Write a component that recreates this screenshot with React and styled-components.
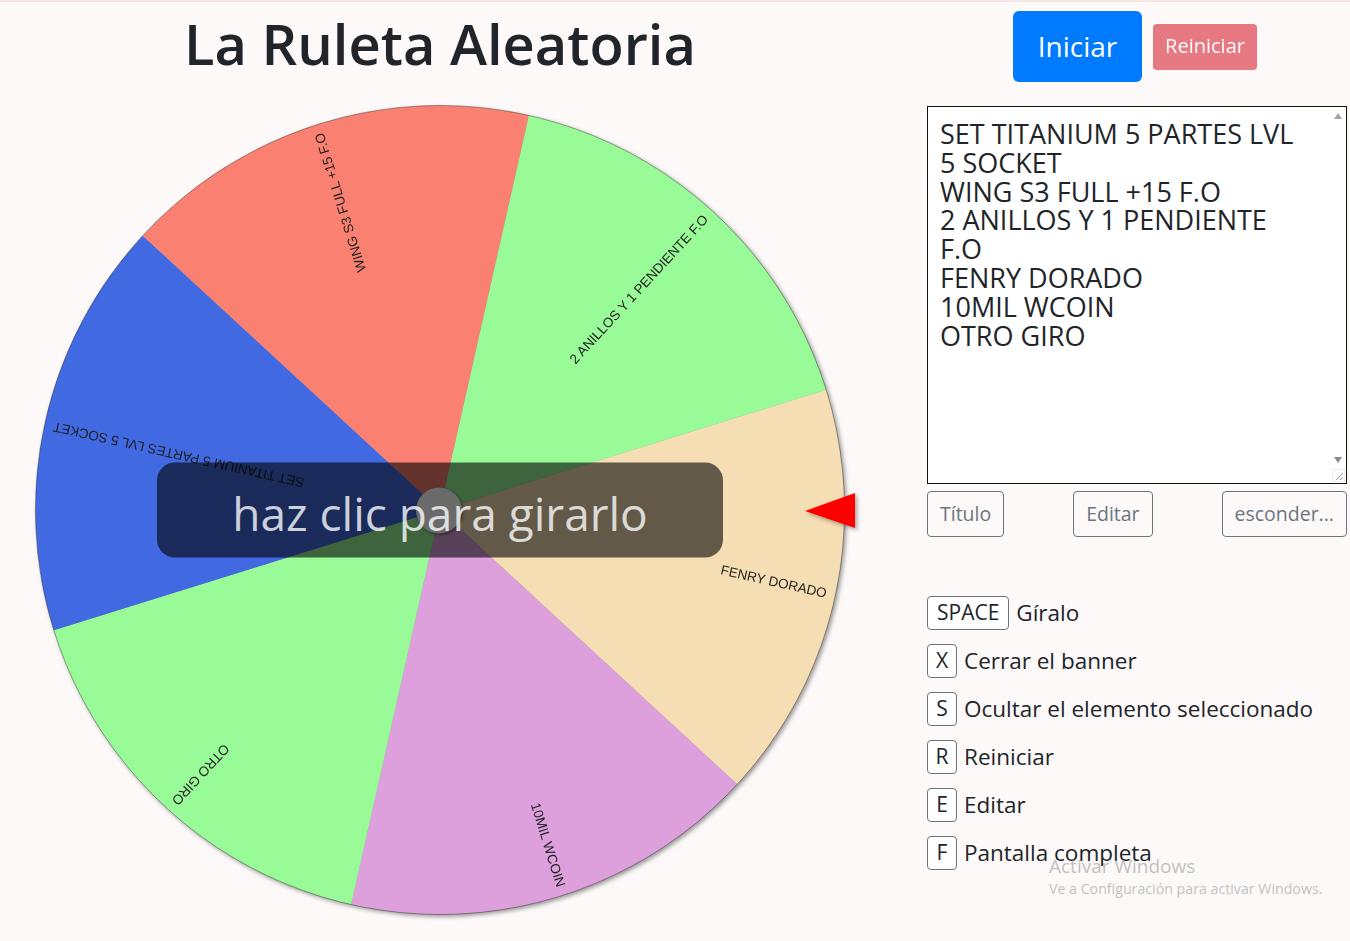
import React from 'react';
import styled, { createGlobalStyle } from 'styled-components';

const Global = createGlobalStyle`
  html, body { margin: 0; padding: 0; background: #fdf9f9; }
  body { font-family: "Open Sans", "Noto Sans", sans-serif; color: #212529; }
  * { box-sizing: border-box; }
`;

const Page = styled.div`
  position: relative;
  width: 1350px;
  height: 941px;
  border-top: 2px solid #f4e4e4;
  display: flex;
  overflow: hidden;
`;

const LeftCol = styled.div`
  width: 880px;
  display: flex;
  flex-direction: column;
  align-items: center;
`;

const TitleBar = styled.div`
  height: 103px;
  display: flex;
  justify-content: center;
  align-items: flex-start;
  padding-top: 3px;
`;

const Title = styled.h1`
  margin: 0;
  font-size: 56px;
  line-height: 76px;
  font-weight: 600;
  color: #212529;
`;

const WheelArea = styled.div`
  position: relative;
  width: 880px;
  height: 810px;
  display: flex;
  justify-content: center;
`;

const WheelSvg = styled.svg`
  width: 810px;
  height: 810px;
  overflow: visible;
  filter: drop-shadow(2px 2px 2px rgba(0, 0, 0, 0.4));
`;

const SegLabel = styled.text`
  font-family: "Liberation Sans", Arial, sans-serif;
  font-size: 13.5px;
  fill: #1e1e1e;
`;

const Pointer = styled.svg`
  position: absolute;
  left: 805px;
  top: 388px;
  width: 50px;
  height: 35px;
  filter: drop-shadow(2px 2px 2px rgba(0, 0, 0, 0.35));
`;

const Banner = styled.div`
  position: absolute;
  left: 50%;
  top: 50%;
  transform: translate(-50%, -50%);
  width: 566px;
  height: 95px;
  border-radius: 18px;
  background: rgba(0, 0, 0, 0.6);
  display: flex;
  align-items: center;
  justify-content: center;
  cursor: pointer;
`;

const BannerText = styled.span`
  position: relative;
  z-index: 1;
  color: rgba(255, 255, 255, 0.78);
  font-size: 46px;
  white-space: nowrap;
  margin-top: 4px;
`;

const Hub = styled.div`
  position: absolute;
  left: 259px;
  top: 25px;
  width: 46px;
  height: 46px;
  border-radius: 50%;
  background: #6a6a6a;
  box-shadow: 1px 1px 3px rgba(0, 0, 0, 0.5);
`;

const RightCol = styled.div`
  width: 420px;
  margin-left: 47px;
  display: flex;
  flex-direction: column;
`;

const ButtonBar = styled.div`
  height: 104px;
  padding-top: 9px;
  padding-right: 4px;
  display: flex;
  justify-content: center;
  align-items: flex-start;
`;

const ButtonRow = styled.div`
  display: flex;
  align-items: center;
  gap: 11px;
`;

const PrimaryButton = styled.button`
  font-family: inherit;
  width: 129px;
  height: 71px;
  border: none;
  border-radius: 6px;
  background: #007bff;
  color: #fff;
  font-size: 28px;
  padding: 0 0 2px;
  cursor: pointer;
`;

const DangerButton = styled.button`
  font-family: inherit;
  width: 104px;
  height: 46px;
  border: none;
  border-radius: 4px;
  background: #dc3545;
  opacity: 0.65;
  color: #fff;
  font-size: 20px;
  padding: 0 0 2px;
`;

const EditorBox = styled.div`
  position: relative;
  width: 420px;
  height: 378px;
  border: 1px solid #111;
  background: #fff;
`;

const Editor = styled.textarea`
  display: block;
  width: 100%;
  height: 100%;
  border: none;
  outline: none;
  resize: none;
  overflow: hidden;
  background: transparent;
  font-family: inherit;
  font-size: 27px;
  line-height: 28.8px;
  color: #212529;
  padding: 13px 20px 12px 12px;
  white-space: pre;
`;

const ScrollArrow = styled.div`
  position: absolute;
  right: 4px;
  width: 0;
  height: 0;
  border-left: 4.5px solid transparent;
  border-right: 4.5px solid transparent;
  ${(p) => (p.$up ? 'top: 6px; border-bottom: 6px solid #a3a3a3;' : 'bottom: 20px; border-top: 6px solid #8a8a8a;')}
`;

const ResizeGrip = styled.svg`
  position: absolute;
  right: 1px;
  bottom: 1px;
  width: 13px;
  height: 13px;
`;

const ActionRow = styled.div`
  margin-top: 7px;
  display: flex;
  justify-content: space-between;
`;

const OutlineButton = styled.button`
  font-family: inherit;
  height: 46px;
  padding: 0 12px 2px;
  border: 1px solid #6c757d;
  border-radius: 4px;
  background: transparent;
  color: #6c757d;
  font-size: 19.5px;
  cursor: pointer;
`;

const ShortcutList = styled.div`
  margin-top: 59px;
  display: flex;
  flex-direction: column;
  gap: 14px;
`;

const ShortcutRow = styled.div`
  display: flex;
  align-items: center;
  gap: 7px;
  height: 34px;
`;

const Kbd = styled.span`
  display: inline-flex;
  align-items: center;
  justify-content: center;
  height: 34px;
  min-width: 30px;
  padding: 0 ${(p) => (p.$wide ? 9 : 7)}px 2px;
  border: 1px solid #6c757d;
  border-radius: 4px;
  background: #fff;
  font-size: 21px;
  color: #212529;
`;

const ShortcutText = styled.span`
  font-size: 22.5px;
  color: #212529;
  padding-bottom: 2px;
`;

const Watermark = styled.div`
  position: absolute;
  left: 1049px;
  top: 851px;
  pointer-events: none;
  color: rgba(140, 140, 140, 0.55);
  font-family: "Open Sans", sans-serif;
`;

const WatermarkTitle = styled.div`
  font-size: 19px;
  line-height: 26px;
`;

const WatermarkSub = styled.div`
  font-size: 14.2px;
  line-height: 20px;
`;

const segments = [
  { label: 'FENRY DORADO', color: '#F5DEB3' },
  { label: '10MIL WCOIN', color: '#DDA0DD' },
  { label: 'OTRO GIRO', color: '#98FB98' },
  { label: 'SET TITANIUM 5 PARTES LVL 5 SOCKET', color: '#4169E1' },
  { label: 'WING S3 FULL +15 F.O', color: '#FA8072' },
  { label: '2 ANILLOS Y 1 PENDIENTE F.O', color: '#98FB98' },
];

const START = -17.3;
const C = 405;
const R = 404.5;

function pt(deg) {
  const r = (deg * Math.PI) / 180;
  return [C + R * Math.cos(r), C + R * Math.sin(r)];
}

function Wheel() {
  return (
    <WheelSvg viewBox="0 0 810 810">
      {segments.map((s, i) => {
        const a0 = START + i * 60;
        const a1 = a0 + 60;
        const [x0, y0] = pt(a0);
        const [x1, y1] = pt(a1);
        return (
          <path
            key={i}
            d={`M ${C} ${C} L ${x0} ${y0} A ${R} ${R} 0 0 1 ${x1} ${y1} Z`}
            fill={s.color}
          />
        );
      })}
      <circle cx={C} cy={C} r={R} fill="none" stroke="rgba(0,0,0,0.35)" strokeWidth="1" />
      {segments.map((s, i) => {
        const mid = START + i * 60 + 30;
        return (
          <SegLabel
            key={'t' + i}
            x={C + R - 9}
            y={C + 1}
            textAnchor="end"
            transform={`rotate(${mid} ${C} ${C})`}
          >
            {s.label}
          </SegLabel>
        );
      })}
    </WheelSvg>
  );
}

const items =
  'SET TITANIUM 5 PARTES LVL\n5 SOCKET\nWING S3 FULL +15 F.O\n2 ANILLOS Y 1 PENDIENTE\nF.O\nFENRY DORADO\n10MIL WCOIN\nOTRO GIRO';

const shortcuts = [
  ['SPACE', 'Gíralo'],
  ['X', 'Cerrar el banner'],
  ['S', 'Ocultar el elemento seleccionado'],
  ['R', 'Reiniciar'],
  ['E', 'Editar'],
  ['F', 'Pantalla completa'],
];

export default function App() {
  return (
    <>
      <Global />
      <Page>
        <LeftCol>
          <TitleBar>
            <Title>La Ruleta Aleatoria</Title>
          </TitleBar>
          <WheelArea>
            <Wheel />
            <Banner>
              <Hub />
              <BannerText>haz clic para girarlo</BannerText>
            </Banner>
            <Pointer viewBox="0 0 50 35">
              <polygon points="0,18 50,0 50,35" fill="#ff0000" />
            </Pointer>
          </WheelArea>
        </LeftCol>
        <RightCol>
          <ButtonBar>
            <ButtonRow>
              <PrimaryButton>Iniciar</PrimaryButton>
              <DangerButton disabled>Reiniciar</DangerButton>
            </ButtonRow>
          </ButtonBar>
          <EditorBox>
            <Editor defaultValue={items} spellCheck={false} />
            <ScrollArrow $up />
            <ScrollArrow />
            <ResizeGrip viewBox="0 0 13 13">
              <rect x="0" y="0" width="13" height="13" fill="#fff" stroke="#e0e0e0" strokeWidth="1" />
              <line x1="11" y1="4" x2="4" y2="11" stroke="#999" strokeWidth="1" />
              <line x1="11" y1="8" x2="8" y2="11" stroke="#999" strokeWidth="1" />
            </ResizeGrip>
          </EditorBox>
          <ActionRow>
            <OutlineButton>Título</OutlineButton>
            <OutlineButton>Editar</OutlineButton>
            <OutlineButton>esconder...</OutlineButton>
          </ActionRow>
          <ShortcutList>
            {shortcuts.map(([k, t]) => (
              <ShortcutRow key={k}>
                <Kbd $wide={k.length > 1}>{k}</Kbd>
                <ShortcutText>{t}</ShortcutText>
              </ShortcutRow>
            ))}
          </ShortcutList>
        </RightCol>
        <Watermark>
          <WatermarkTitle>Activar Windows</WatermarkTitle>
          <WatermarkSub>Ve a Configuración para activar Windows.</WatermarkSub>
        </Watermark>
      </Page>
    </>
  );
}
